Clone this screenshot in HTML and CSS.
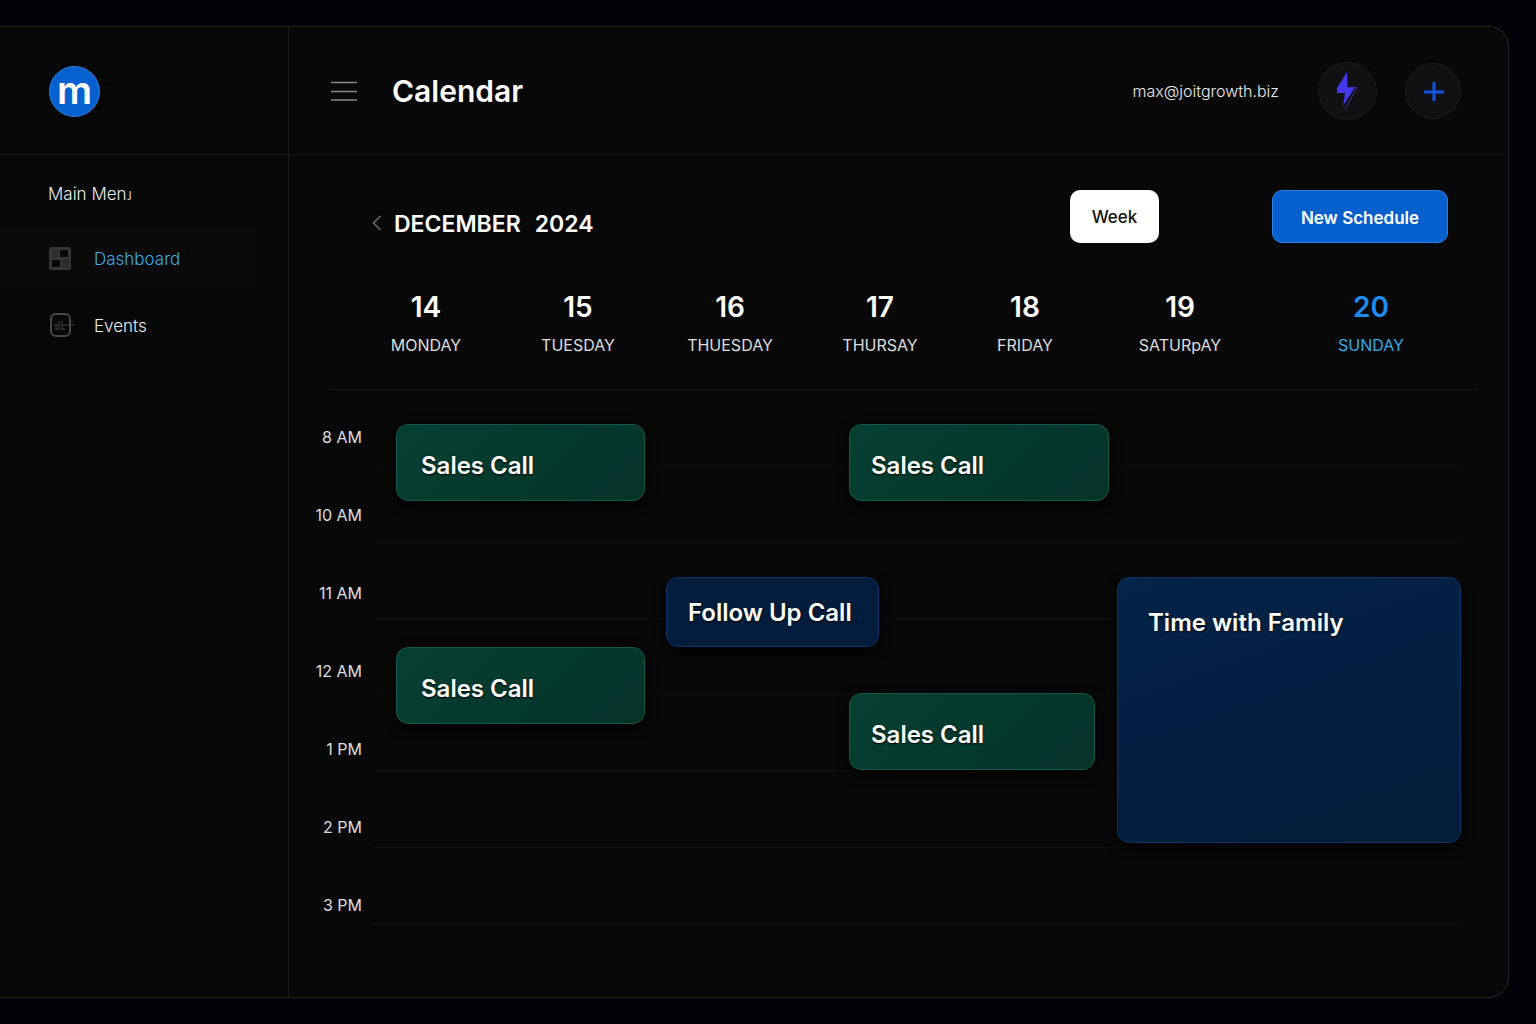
FILE: index.html
```html
<!DOCTYPE html>
<html lang="en">
<head>
<meta charset="utf-8">
<meta name="viewport" content="width=device-width, initial-scale=1">
<title>Calendar</title>
<link rel="stylesheet" href="styles.css">
</head>
<body>
<div class="app">
  <aside class="sidebar">
    <div class="brand"><a class="logo" href="#" aria-label="Home">m</a></div>
    <nav class="menu" aria-label="Main">
      <h2 class="menu-title">Main Menᴊ</h2>
      <a class="menu-item is-active" href="#" aria-current="page">
        <svg class="menu-icon" viewBox="0 0 26 26" aria-hidden="true">
          <rect x="1" y="1" width="22" height="23" rx="2" fill="#363636"/>
          <path d="M12 4h8v7h-8zM4 14h8v7H4z" fill="#080808"/>
          <path d="M4 4h6v8H4zM14 13h7v9h-7z" fill="#2c2c2c"/>
        </svg>
        <span>Dashboard</span>
      </a>
      <a class="menu-item" href="#">
        <svg class="menu-icon" viewBox="0 0 26 26" fill="none" stroke="#484848" aria-hidden="true">
          <rect x="3" y="1" width="19" height="22" rx="5" stroke-width="2"/>
          <path d="M14 12h12M6 12h5M11 8v9M14 8v9M7 16h3M14 16h3M8 12v4" stroke-width="1"/>
        </svg>
        <span>Events</span>
      </a>
    </nav>
  </aside>

  <main class="main">
    <header class="topbar">
      <button class="icon-button" type="button" aria-label="Toggle menu">
        <svg width="28" height="20" viewBox="0 0 28 20" stroke="#8a8a8a" stroke-width="1.4" aria-hidden="true"><path d="M1 1.5h26M1 10.5h26M1 19h26"/></svg>
      </button>
      <h1 class="page-title">Calendar</h1>
      <span class="account">max@joitgrowth.biz</span>
      <button class="round-button" type="button" aria-label="Quick actions">
        <svg width="24" height="40" viewBox="0 0 24 40" aria-hidden="true">
          <path d="M12 16.500h9L9 38.500" fill="none" stroke="#3a358c" stroke-width="1"/>
          <path d="M11 1 1 17v5h8L7 35l12-18.500h-7.500z" fill="#4438ee"/>
        </svg>
      </button>
      <button class="round-button round-button-add" type="button" aria-label="Add">
        <svg width="22" height="22" viewBox="0 0 22 22" stroke="#1453de" stroke-width="3" aria-hidden="true"><path d="M12 2v19M2 12h20"/></svg>
      </button>
    </header>

    <div class="toolbar">
      <div class="period">
        <button class="icon-button" type="button" aria-label="Previous week">
          <svg width="10" height="18" viewBox="0 0 10 18" fill="none" stroke="#6c6c6c" stroke-width="1.6" aria-hidden="true"><path d="M8.500 1 1.500 8l7 7"/></svg>
        </button>
        <h2 class="period-title"><span>DECEMBER</span><span>2024</span></h2>
      </div>
      <button class="button button-light" type="button">Week</button>
      <button class="button button-primary" type="button">New Schedule</button>
    </div>

    <ol class="days">
      <li class="day"><strong>14</strong><span>MONDAY</span></li>
      <li class="day"><strong>15</strong><span>TUESDAY</span></li>
      <li class="day"><strong>16</strong><span>THUESDAY</span></li>
      <li class="day"><strong>17</strong><span>THURSAY</span></li>
      <li class="day"><strong>18</strong><span>FRIDAY</span></li>
      <li class="day"><strong>19</strong><span>SATURpAY</span></li>
      <li class="day is-today"><strong>20</strong><span>SUNDAY</span></li>
    </ol>

    <section class="schedule" aria-label="Week schedule">
      <ol class="hours">
        <li>8 AM</li><li>10 AM</li><li>11 AM</li><li>12 AM</li><li>1 PM</li><li>2 PM</li><li>3 PM</li>
      </ol>
      <div class="lines" aria-hidden="true"><i></i><i></i><i></i><i></i><i></i><i></i><i></i></div>
      <div class="events">
        <article class="event sales monday-early">Sales Call</article>
        <article class="event sales thursday-early">Sales Call</article>
        <article class="event follow-up">Follow Up Call</article>
        <article class="event sales monday-late">Sales Call</article>
        <article class="event sales thursday-late">Sales Call</article>
        <article class="event family">Time with Family</article>
      </div>
    </section>
  </main>
</div>
</body>
</html>
```
FILE: styles.css
```css
* {
  box-sizing: border-box;
}

body {
  min-height: 100vh;
  margin: 0;
  padding: 26px 27px 26px 0;
  display: flex;
  background: #020208;
  color: #ececec;
  font-family: Inter, "Noto Sans", "Liberation Sans", sans-serif;
  font-size: 17px;
  line-height: 24px;
}

h1, h2, ol {
  margin: 0;
  padding: 0;
  list-style: none;
}

a {
  color: inherit;
  text-decoration: none;
}

button {
  padding: 0;
  border: 0;
  background: none;
  color: inherit;
  font: inherit;
  cursor: pointer;
}

svg {
  display: block;
}

.app {
  flex: 1;
  display: grid;
  grid-template-columns: 289px 1fr;
  border: 1px solid #232323;
  border-left: 0;
  border-radius: 0 20px 20px 0;
  background: #080808;
  overflow: hidden;
}

/* Sidebar */

.sidebar {
  border-right: 1px solid #191919;
  background: #060707;
}

.brand {
  height: 128px;
  padding: 1px 0 0 49px;
  display: flex;
  align-items: center;
  border-bottom: 1px solid #151515;
}

.logo {
  width: 51px;
  height: 51px;
  display: flex;
  justify-content: center;
  border: 1px solid #2a7be0;
  border-radius: 50%;
  background: #0561cf;
  color: #fff;
  font-size: 39px;
  font-weight: 600;
  line-height: 46px;
}

.menu {
  padding-top: 27px;
}

.menu-title {
  margin-bottom: 23px;
  padding-left: 48px;
  font-size: 17px;
  font-weight: 300;
  line-height: 24px;
}

.menu-item {
  height: 60px;
  margin: 0 32px 7px 0;
  padding-left: 48px;
  display: flex;
  align-items: center;
  gap: 20px;
  font-weight: 300;
}

.menu-item.is-active {
  background: #0a0a0a;
  color: #3fa9e8;
}

.menu-icon {
  width: 26px;
  height: 26px;
}

/* Top bar */

.topbar {
  height: 128px;
  padding: 1px 47px 0 41px;
  display: flex;
  align-items: center;
  border-bottom: 1px solid #131313;
}

.page-title {
  margin: 0 auto 0 34px;
  color: #fff;
  font-size: 30px;
  font-weight: 600;
  line-height: 40px;
}

.account {
  margin-right: 39px;
  font-size: 16px;
  font-weight: 300;
}

.round-button {
  width: 59px;
  height: 58px;
  display: grid;
  place-items: center;
  border: 1px solid #1b1b1e;
  border-radius: 50%;
  background: #111113;
}

.round-button-add {
  width: 56px;
  height: 56px;
  margin-left: 28px;
}

/* Period and actions */

.toolbar {
  padding: 35px 60px 0 83px;
  display: flex;
  align-items: center;
}

.period {
  margin: 14px auto 0 0;
  display: flex;
  align-items: center;
  gap: 12px;
}

.period-title {
  display: flex;
  gap: 14px;
  color: #fff;
  font-size: 23px;
  font-weight: 600;
  line-height: 32px;
}

.button {
  height: 53px;
  border-radius: 10px;
  font-size: 17px;
  font-weight: 600;
}

.button-light {
  width: 89px;
  margin-right: 113px;
  background: #fff;
  color: #111;
  font-weight: 500;
}

.button-primary {
  width: 176px;
  padding-top: 2px;
  border: 1px solid #2c7fe6;
  background: #0560ce;
  color: #fff;
}

/* Day headings */

.days {
  margin: 46px 30px 0 40px;
  padding: 0 0 32px 21px;
  display: grid;
  grid-template-columns: 152fr 152fr 152fr 148fr 142fr 168fr 214fr;
  border-bottom: 1px solid #181818;
}

.day {
  display: flex;
  flex-direction: column;
  align-items: center;
  gap: 8px;
}

.day strong {
  color: #fff;
  font-size: 28px;
  font-weight: 600;
  line-height: 36px;
}

.day span {
  color: #dedede;
  font-size: 16px;
}

.day.is-today strong {
  color: #1b8df0;
}

.day.is-today span {
  color: #35ace9;
}

/* Schedule */

.schedule {
  padding-right: 47px;
  display: grid;
  grid-template-columns: 73px 1fr;
  column-gap: 10px;
}

.hours {
  padding-top: 8px;
  display: grid;
  grid-auto-rows: 78px;
  align-items: center;
  color: #dedede;
  font-size: 16px;
  text-align: right;
}

.lines,
.events {
  grid-area: 1 / 2;
  display: grid;
}

.lines {
  height: 534px;
  grid-auto-rows: 1fr;
}

.lines i {
  border-bottom: 1px solid #101010;
}

.events {
  align-content: start;
  grid-template-columns: 24fr 249fr 21fr 183fr 30fr 216fr 14fr 8fr 344fr;
  grid-template-rows: 34px 77px 76px 70px 46px 31px 46px 73px;
}

.event {
  padding: 6px 24px 0;
  display: flex;
  align-items: center;
  border: 1px solid;
  border-radius: 12px;
  box-shadow: 0 4px 12px #000;
  color: #fff;
  font-size: 24px;
  font-weight: 600;
  line-height: 32px;
  white-space: nowrap;
  text-shadow: 0 1px 2px #000;
}

.sales {
  border-color: #14594a;
  background: linear-gradient(135deg, #054032, #05332a);
}

.family {
  border-color: #0c3564;
  background: linear-gradient(160deg, #022448, #021c38);
}

.monday-early {
  grid-area: 2 / 2;
}

.thursday-early {
  grid-area: 2 / 5 / auto / span 3;
  padding-left: 21px;
}

.follow-up {
  grid-area: 4 / 4 / auto / span 2;
  padding: 2px 21px 0;
  border-color: #0c3564;
  background: #021d3b;
}

.monday-late {
  grid-area: 5 / 2 / span 2;
}

.thursday-late {
  grid-area: 6 / 5 / span 2 / span 2;
  padding-left: 21px;
}

.family {
  grid-area: 4 / 9 / span 5;
  padding: 29px 30px;
  align-items: flex-start;
}
```
